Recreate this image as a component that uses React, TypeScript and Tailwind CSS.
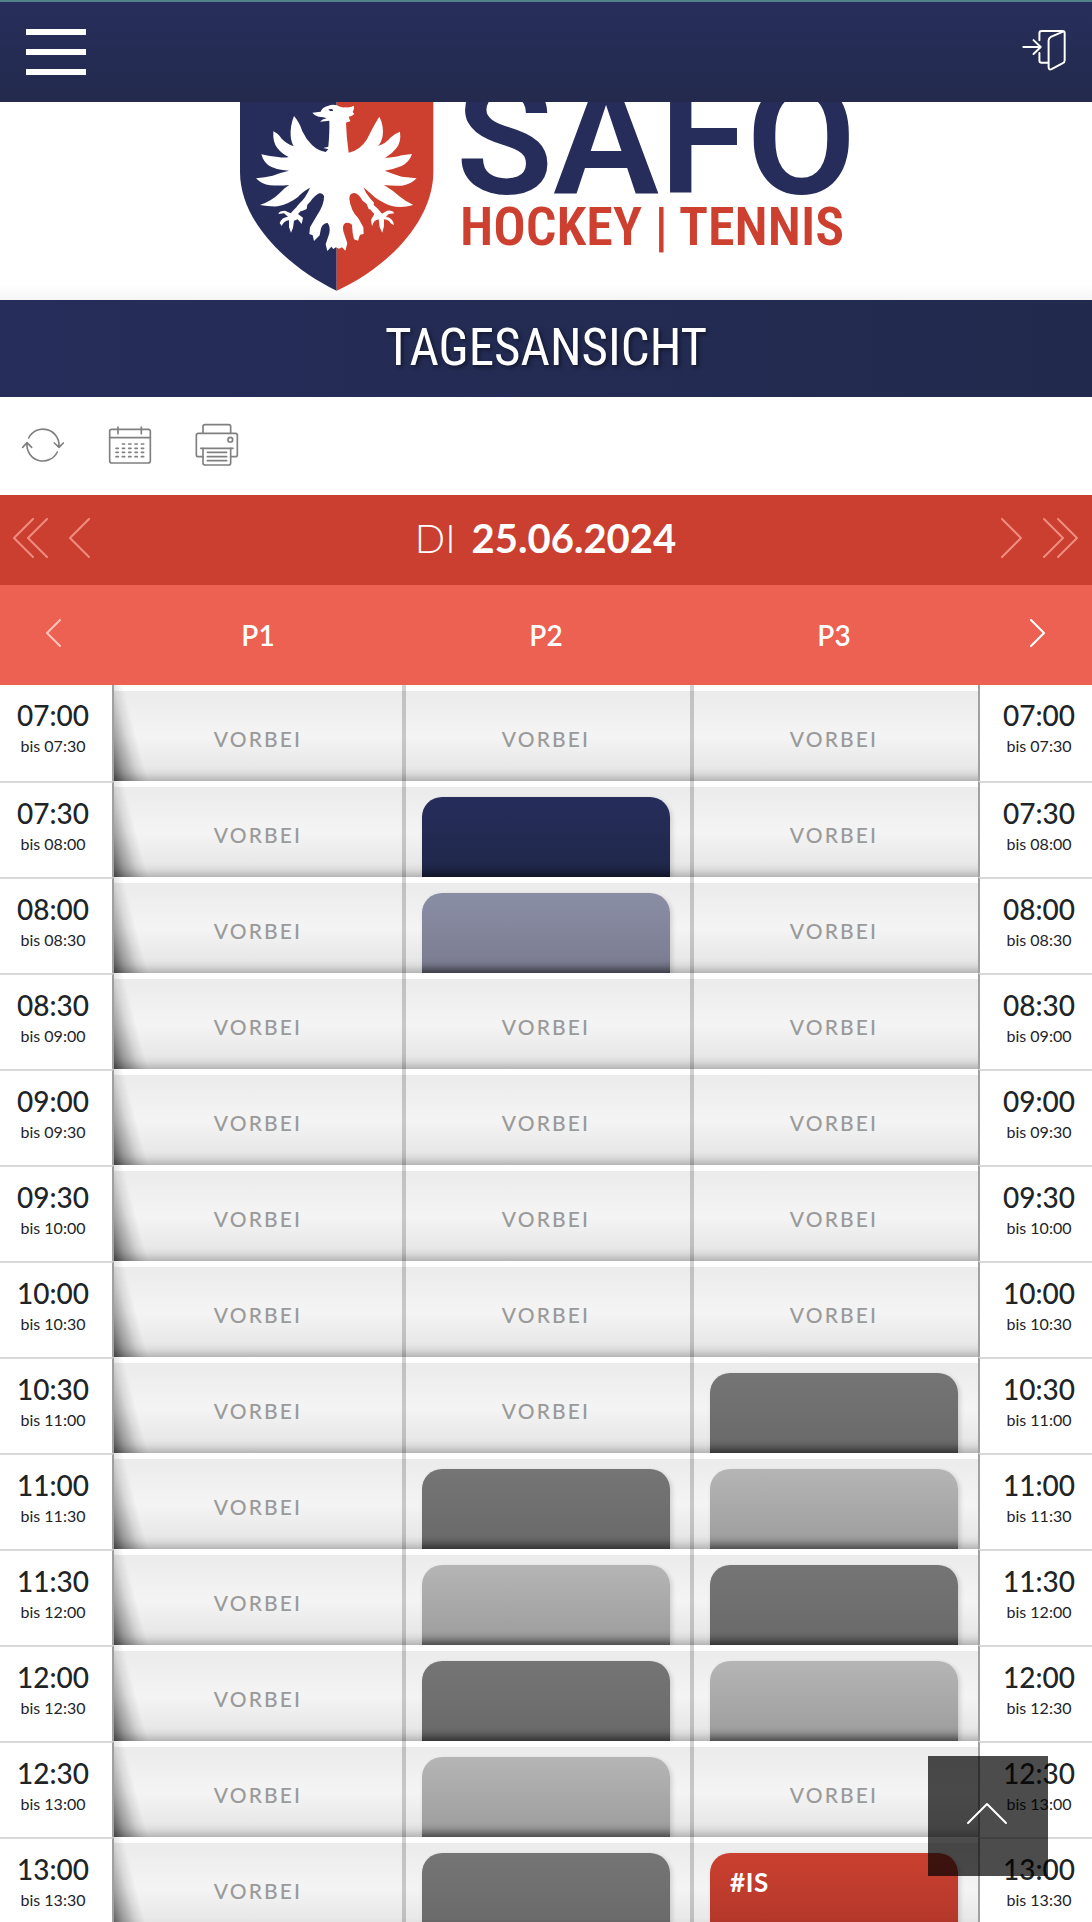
import type { ReactNode } from "react";

type Kind = "past" | "navy" | "lilac" | "dark" | "light" | "red";

const blockStyles: Record<Exclude<Kind, "past">, string> = {
  navy: "from-[#262d5b] to-[#1f2749]",
  lilac: "from-[#8a8ea5] to-[#7a7b8f]",
  dark: "from-[#757575] to-[#696969]",
  light: "from-[#b5b5b5] to-[#9c9c9c]",
  red: "from-[#cb4030] to-[#b1372a]",
};

const rows: { from: string; to: string; slots: [Kind, Kind, Kind]; label?: string }[] = [
  { from: "07:00", to: "07:30", slots: ["past", "past", "past"] },
  { from: "07:30", to: "08:00", slots: ["past", "navy", "past"] },
  { from: "08:00", to: "08:30", slots: ["past", "lilac", "past"] },
  { from: "08:30", to: "09:00", slots: ["past", "past", "past"] },
  { from: "09:00", to: "09:30", slots: ["past", "past", "past"] },
  { from: "09:30", to: "10:00", slots: ["past", "past", "past"] },
  { from: "10:00", to: "10:30", slots: ["past", "past", "past"] },
  { from: "10:30", to: "11:00", slots: ["past", "past", "dark"] },
  { from: "11:00", to: "11:30", slots: ["past", "dark", "light"] },
  { from: "11:30", to: "12:00", slots: ["past", "light", "dark"] },
  { from: "12:00", to: "12:30", slots: ["past", "dark", "light"] },
  { from: "12:30", to: "13:00", slots: ["past", "light", "past"] },
  { from: "13:00", to: "13:30", slots: ["past", "dark", "red"], label: "#IS" },
];

function Chevron({ d, box, className }: { d: string; box: string; className: string }) {
  return (
    <svg viewBox={box} className={className} fill="none" stroke="currentColor" strokeWidth="2" strokeLinecap="round" strokeLinejoin="round" aria-hidden="true">
      <path d={d} />
    </svg>
  );
}

function IconButton({ label, box, children }: { label: string; box: string; children: ReactNode }) {
  return (
    <button type="button" aria-label={label} className="size-[46px] text-[#808080]">
      <svg viewBox={box} className="size-full" fill="none" stroke="currentColor" strokeWidth="5" strokeLinecap="round" strokeLinejoin="round" aria-hidden="true">
        {children}
      </svg>
    </button>
  );
}

function Logo() {
  return (
    <svg viewBox="220 102 652 198" className="block w-[652px] max-w-full" role="img" aria-label="SAFO Hockey Tennis">
      <g transform="translate(220 90) scale(0.33333)">
        <path d="M60 0H350V602C210 535 60 400 60 245Z" fill="#262d5b" />
        <path d="M350 0H640V245C640 400 490 540 350 602Z" fill="#cd3f2f" />
        <g fill="#fff">
          <path d="M277 68 302 65Q306 52 325 47Q338 42 351 46Q362 54 375 52Q390 54 402 47Q404 58 398 66L403 72Q395 80 386 80L391 94Q382 96 378 98Q379 140 386 188Q420 182 441 148Q460 108 478 80Q492 106 488 138Q484 158 474 168Q498 160 511 143Q525 130 540 125Q544 155 530 173Q516 192 495 204Q525 202 545 196L576 192Q568 216 545 228Q520 238 494 242Q520 252 545 260L590 265Q572 284 545 287Q515 288 492 285Q520 302 540 320Q560 336 580 345Q545 355 515 348Q475 335 447 306L430 292Q438 312 450 325L462 338 460 347 466 352 458 360 446 357 440 342 428 332Q414 308 402 309Q388 310 388 326Q392 362 415 385L430 412 431 432 420 434 414 452 402 448 398 430 396 404Q388 396 376 399Q366 404 370 424L382 460 376 482 366 472 357 476 348 472 340 477 334 470 322 483 317 463 328 430Q332 408 322 398Q304 402 302 420L299 436 282 453 278 436 268 432 270 412 290 378Q314 342 312 318Q308 308 298 310Q284 316 272 334L262 344 260 357 244 364 238 354 230 350 239 340Q258 322 270 293Q246 306 234 321Q205 343 173 349Q146 350 120 345Q156 332 180 308Q192 294 208 285Q180 288 150 286Q126 284 108 265Q136 262 158 257Q180 248 207 242Q166 240 145 226Q130 214 124 193Q150 199 174 201Q192 204 206 201Q186 192 172 174Q158 158 160 124Q174 130 185 146Q199 161 222 169Q214 160 212 138Q210 108 222 78Q238 96 247 124Q258 148 276 165Q294 182 317 186L325 178 310 174 325 170Q329 125 328 92L300 95Q306 87 320 85Q312 80 296 80Q284 78 277 68Z" />
          <path d="M244 338 252 348Q243 364 234 372L249 383 245 402 233 388 222 392 219 413 213 428 207 411 207 391Q191 393 185 408L179 399Q184 383 204 380L192 370 175 372Q178 362 195 362L212 370 226 355Z" />
          <path d="M453 338 445 348Q454 364 463 372L453 390 456 409Q461 390 476 388L479 412 487 428 492 408 492 388Q508 390 512 400L522 406Q520 384 498 380L506 372 523 370Q517 359 501 362L486 371 472 355Z" />
        </g>
        <path d="M325 58 337 57 339 63 330 63Z" fill="#262d5b" />
      </g>
      <text x="456" y="193" fontSize="159" fontWeight="600" fill="#262d5b" fontFamily="Roboto, sans-serif">SAFO</text>
      <text x="460" y="245" fontSize="54" fontWeight="600" fill="#cd3f2f" fontFamily="'Roboto Condensed', Roboto, sans-serif">HOCKEY | TENNIS</text>
    </svg>
  );
}

function TimeCell({ from, to, side, first }: { from: string; to: string; side: "left" | "right"; first: boolean }) {
  return (
    <th scope={side === "left" ? "row" : undefined} className="p-0 font-normal">
      <div
        className={
          "flex h-24 flex-col items-center pt-3 text-[#212427] " +
          (side === "left" ? "border-r-2 border-r-[#a0a0a0] pr-1.5 " : "border-l-2 border-l-[#a0a0a0] pl-1.5 ") +
          (first ? "" : "border-t-2 border-t-[#d8d8d8]")
        }
      >
        <span className="text-[28px] leading-9 font-medium">{from}</span>
        <span className="text-base leading-[26px]">bis {to}</span>
      </div>
    </th>
  );
}

function Slot({ kind, index, label }: { kind: Kind; index: number; label?: string }) {
  return (
    <td className="p-0">
      <div className="relative h-24 pt-1.5">
        <div className="h-full overflow-hidden bg-linear-to-b from-[#ebebeb] via-[#f4f4f4] to-[#e3e3e3] shadow-[inset_0_-14px_12px_-12px_rgba(0,0,0,0.32)]">
          {kind === "past" ? (
            <p className="flex h-full items-center justify-center pt-1.5 text-[21px] font-medium tracking-widest text-[#9a9a9a]">VORBEI</p>
          ) : (
            <div className="h-full px-5 pt-2.5">
              <button
                type="button"
                aria-label={label ?? "Belegt"}
                className={
                  "flex h-full w-full rounded-t-[20px] bg-linear-to-b px-5 pt-2.5 text-[26px] font-bold tracking-wide text-white shadow-[inset_0_-14px_10px_-10px_rgba(0,0,0,0.6),2px_2px_5px_rgba(0,0,0,0.15)] " +
                  blockStyles[kind]
                }
              >
                {label}
              </button>
            </div>
          )}
        </div>
        {index === 0 ? (
          <div className="absolute top-0 bottom-0 left-0 w-[34px] bg-[linear-gradient(75deg,rgba(0,0,0,0.65),rgba(0,0,0,0.35)_20%,rgba(0,0,0,0.1)_42%,transparent_58%)]" />
        ) : (
          <div className="absolute top-0 bottom-0 left-0 w-1 bg-black/18" />
        )}
      </div>
    </td>
  );
}

export default function App() {
  return (
    <div className="min-h-screen bg-white font-['Lato',sans-serif]">
      <header className="sticky top-0 z-10 flex h-[102px] items-center justify-between border-t-2 border-[#508288] bg-linear-to-b from-[#272e5b] to-[#232a4d] px-[26px]">
        <button type="button" aria-label="Menü" className="flex w-[60px] flex-col gap-3.5">
          <span className="h-1.5 bg-white" />
          <span className="h-1.5 bg-white" />
          <span className="h-1.5 bg-white" />
        </button>
        <a href="#login" aria-label="Anmelden" className="pb-1 text-white">
          <svg viewBox="246 87 134 129" className="w-[44px]" fill="none" stroke="currentColor" strokeWidth="6" strokeLinecap="round" strokeLinejoin="round" aria-hidden="true">
            <path d="M250 142H303M281 121 303 142 281 163" />
            <path d="M299 121V100Q299 93 306 93H369Q376 93 376 100V182Q376 189 369 192L336 209Q327 213 327 203V122Q327 115 334 111L371 95M299 160V183Q299 190 306 190H325" />
          </svg>
        </a>
      </header>

      <div className="flex justify-center bg-[linear-gradient(to_top,#f5f5f5,#fff_16px)]">
        <Logo />
      </div>

      <h1 className="flex h-[97px] items-center justify-center bg-linear-to-r from-[#262d5a] to-[#212a4d] font-['Roboto_Condensed','Roboto',sans-serif] text-[51px] text-white [text-shadow:2px_2px_4px_rgba(0,0,0,0.5)]">
        TAGESANSICHT
      </h1>

      <nav aria-label="Werkzeuge" className="flex h-[98px] items-center gap-[41px] px-5 pb-0.5">
        <IconButton label="Aktualisieren" box="60 66 138 138">
          <path d="M86 114A48 48 0 0 1 177 137M163 129 177 142 190 129M172 156A48 48 0 0 1 81 131M68 142 81 128 95 142" />
        </IconButton>
        <IconButton label="Kalender" box="321 66 138 138">
          <rect x="329" y="88" width="122" height="101" rx="6" />
          <path d="M329 113H451M354 81V101M424 81V101" />
          <path d="M367 132H374M386 132H393M405 132H412M424 132H431M348 145H355M367 145H374M386 145H393M405 145H412M424 145H431M348 157H355M367 157H374M386 157H393M405 157H412M424 157H431M348 170H355M367 170H374M386 170H393M405 170H412M424 170H431" />
        </IconButton>
        <IconButton label="Drucken" box="581 66 138 138">
          <path d="M608 100V80Q608 74 614 74H685Q691 74 691 80V100" />
          <path d="M608 170H594Q588 170 588 164V106Q588 100 594 100H705Q711 100 711 106V164Q711 170 705 170H691M601 145H698" />
          <path d="M608 145V189Q608 195 614 195H685Q691 195 691 189V145M621 157H679M621 170H679M621 182H679" />
          <circle cx="690" cy="119" r="7" />
        </IconButton>
      </nav>

      <section aria-label="Datum" className="flex h-[90px] items-center justify-between bg-[#ca3f2f] pr-3.5 pb-1 pl-[13px] text-[#f08c80]">
        <div className="flex items-center gap-5">
          <button type="button" aria-label="Woche zurück">
            <Chevron box="0 0 36 40" className="w-9" d="M20 1 1 20 20 39M34 1 15 20 34 39" />
          </button>
          <button type="button" aria-label="Tag zurück">
            <Chevron box="0 0 22 40" className="w-[22px]" d="M20 1 1 20 20 39" />
          </button>
        </div>
        <h2 className="text-[40px] text-white">
          <span className="mr-4 font-light">DI</span>
          <span className="font-bold">25.06.2024</span>
        </h2>
        <div className="flex items-center gap-5">
          <button type="button" aria-label="Tag vor">
            <Chevron box="0 0 22 40" className="w-[22px]" d="M2 1 21 20 2 39" />
          </button>
          <button type="button" aria-label="Woche vor">
            <Chevron box="0 0 36 40" className="w-9" d="M2 1 21 20 2 39M16 1 35 20 16 39" />
          </button>
        </div>
      </section>

      <table className="w-full table-fixed border-separate border-spacing-0">
        <colgroup>
          <col className="w-[114px]" />
          <col />
          <col />
          <col />
          <col className="w-[114px]" />
        </colgroup>
        <thead className="bg-[#ec6152] text-white">
          <tr className="h-[100px] text-[28px]">
            <th className="p-0 pr-1.5 pb-1">
              <button type="button" aria-label="Vorherige Plätze" className="flex w-full justify-center text-[#ffc4bc]">
                <Chevron box="0 0 16 28" className="w-4" d="M14 1 1 14 14 27" />
              </button>
            </th>
            <th scope="col" className="p-0 font-semibold">P1</th>
            <th scope="col" className="p-0 font-semibold">P2</th>
            <th scope="col" className="p-0 font-semibold">P3</th>
            <th className="p-0 pb-1 pl-1">
              <button type="button" aria-label="Nächste Plätze" className="flex w-full justify-center">
                <Chevron box="0 0 16 28" className="w-4" d="M2 1 15 14 2 27" />
              </button>
            </th>
          </tr>
        </thead>
        <tbody>
          {rows.map((row, r) => (
            <tr key={row.from}>
              <TimeCell from={row.from} to={row.to} side="left" first={r === 0} />
              {row.slots.map((kind, i) => (
                <Slot key={i} kind={kind} index={i} label={i === 2 ? row.label : undefined} />
              ))}
              <TimeCell from={row.from} to={row.to} side="right" first={r === 0} />
            </tr>
          ))}
        </tbody>
      </table>

      <button type="button" aria-label="Nach oben" className="fixed right-11 bottom-[46px] z-10 flex size-[120px] items-center justify-center bg-black/70 pr-0.5 pb-1 text-white">
        <Chevron box="0 0 42 24" className="w-[42px]" d="M2 21 21 2 40 21" />
      </button>
    </div>
  );
}
